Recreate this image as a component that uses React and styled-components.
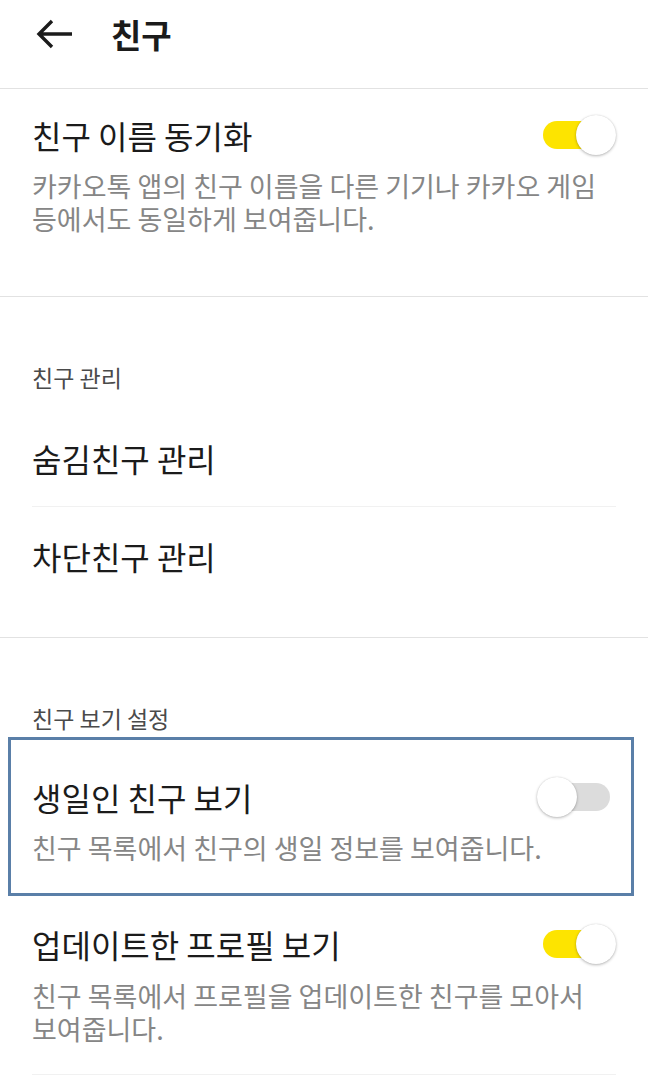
import React from "react";
import styled, { createGlobalStyle } from "styled-components";

const GlobalStyle = createGlobalStyle`
  html, body { margin: 0; padding: 0; background: #ffffff; }
  body {
    font-family: "Noto Sans CJK KR", "Noto Sans", Roboto, sans-serif;
    -webkit-font-smoothing: antialiased;
  }
  * { box-sizing: border-box; }
`;

const Page = styled.div`
  width: 648px;
  background: #fff;
  color: #1b1b1b;
  word-break: keep-all;
`;

const TopBar = styled.header`
  height: 89px;
  display: flex;
  align-items: center;
  padding: 0 0 20px 35px;
  border-bottom: 1px solid #e2e2e2;
  gap: 38px;
`;

const BackButton = styled.button`
  border: 0;
  background: none;
  padding: 0;
  width: 38px;
  height: 32px;
  display: flex;
  align-items: center;
  color: #1b1b1b;
`;

const Title = styled.h1`
  margin: 0;
  font-size: 33px;
  font-weight: 700;
  line-height: 40px;
  color: #1b1b1b;
`;

const Section = styled.section`
  padding-bottom: ${(p) => p.$bottom ?? 32}px;
  border-bottom: ${(p) => (p.$noBorder ? "none" : "1px solid #e2e2e2")};
`;

const SectionLabel = styled.div`
  padding: 65px 32px 4px;
  font-size: 23px;
  line-height: 30px;
  color: #4a4a4a;
`;

const List = styled.div`
  padding-top: ${(p) => p.$top ?? 0}px;
  display: flex;
  flex-direction: column;
`;

const NavRow = styled.div`
  height: 98px;
  margin: 0 32px;
  display: flex;
  align-items: center;
  font-size: 32px;
  line-height: 40px;
  color: #1b1b1b;
  border-bottom: ${(p) => (p.$divider ? "1px solid #f1f1f1" : "none")};
`;

const ToggleRow = styled.div`
  display: flex;
  flex-direction: column;
  gap: ${(p) => (p.$loose ? 15 : 14)}px;
  padding: ${(p) =>
    p.$focused
      ? "37px 21px 29px 21px"
      : p.$loose
      ? "28px 38px 29px 32px"
      : "26px 38px 29px 32px"};
  margin: ${(p) => (p.$focused ? "0 14px 0 8px" : "0")};
  border: ${(p) => (p.$focused ? "3px solid #5a7fa8" : "none")};
`;

const Divider = styled.div`
  height: 1px;
  margin: 0 32px;
  background: #f1f1f1;
`;

const RowHead = styled.div`
  display: flex;
  align-items: center;
  justify-content: space-between;
`;

const RowTitle = styled.div`
  font-size: 32px;
  line-height: 40px;
  color: #1b1b1b;
`;

const RowDesc = styled.div`
  font-size: 27px;
  line-height: 33px;
  color: #868686;
`;

const Track = styled.div`
  position: relative;
  width: 67px;
  height: 28px;
  border-radius: 14px;
  background: ${(p) => (p.$on ? "#fde400" : "#dcdcdc")};
  flex-shrink: 0;
`;

const Thumb = styled.div`
  position: absolute;
  top: -6px;
  left: ${(p) => (p.$on ? "33px" : "-6px")};
  width: 40px;
  height: 40px;
  border-radius: 50%;
  background: #ffffff;
  box-shadow: 0 1px 3px rgba(0, 0, 0, 0.28), 0 0 1px rgba(0, 0, 0, 0.15);
`;

function Switch({ on }) {
  return (
    <Track $on={on}>
      <Thumb $on={on} />
    </Track>
  );
}

function BackArrow() {
  return (
    <svg width="38" height="32" viewBox="0 0 38 32" fill="none">
      <path
        d="M37 16H4M17 3L4 16L17 29"
        stroke="#1b1b1b"
        strokeWidth="3.4"
        strokeLinecap="butt"
        strokeLinejoin="miter"
      />
    </svg>
  );
}

export default function App() {
  return (
    <Page>
      <GlobalStyle />
      <TopBar>
        <BackButton aria-label="뒤로">
          <BackArrow />
        </BackButton>
        <Title>친구</Title>
      </TopBar>

      <Section $bottom={32}>
        <ToggleRow>
          <RowHead>
            <RowTitle>친구 이름 동기화</RowTitle>
            <Switch on />
          </RowHead>
          <RowDesc>
            카카오톡 앱의 친구 이름을 다른 기기나 카카오 게임 등에서도 동일하게
            보여줍니다.
          </RowDesc>
        </ToggleRow>
      </Section>

      <Section $bottom={32}>
        <SectionLabel>친구 관리</SectionLabel>
        <List $top={13}>
          <NavRow $divider>숨김친구 관리</NavRow>
          <NavRow>차단친구 관리</NavRow>
        </List>
      </Section>

      <Section $bottom={0} $noBorder>
        <SectionLabel>친구 보기 설정</SectionLabel>
        <List>
          <ToggleRow $focused>
            <RowHead>
              <RowTitle>생일인 친구 보기</RowTitle>
              <Switch on={false} />
            </RowHead>
            <RowDesc>친구 목록에서 친구의 생일 정보를 보여줍니다.</RowDesc>
          </ToggleRow>
          <ToggleRow $loose>
            <RowHead>
              <RowTitle>업데이트한 프로필 보기</RowTitle>
              <Switch on />
            </RowHead>
            <RowDesc>
              친구 목록에서 프로필을 업데이트한 친구를 모아서 보여줍니다.
            </RowDesc>
          </ToggleRow>
          <Divider />
        </List>
      </Section>
    </Page>
  );
}
